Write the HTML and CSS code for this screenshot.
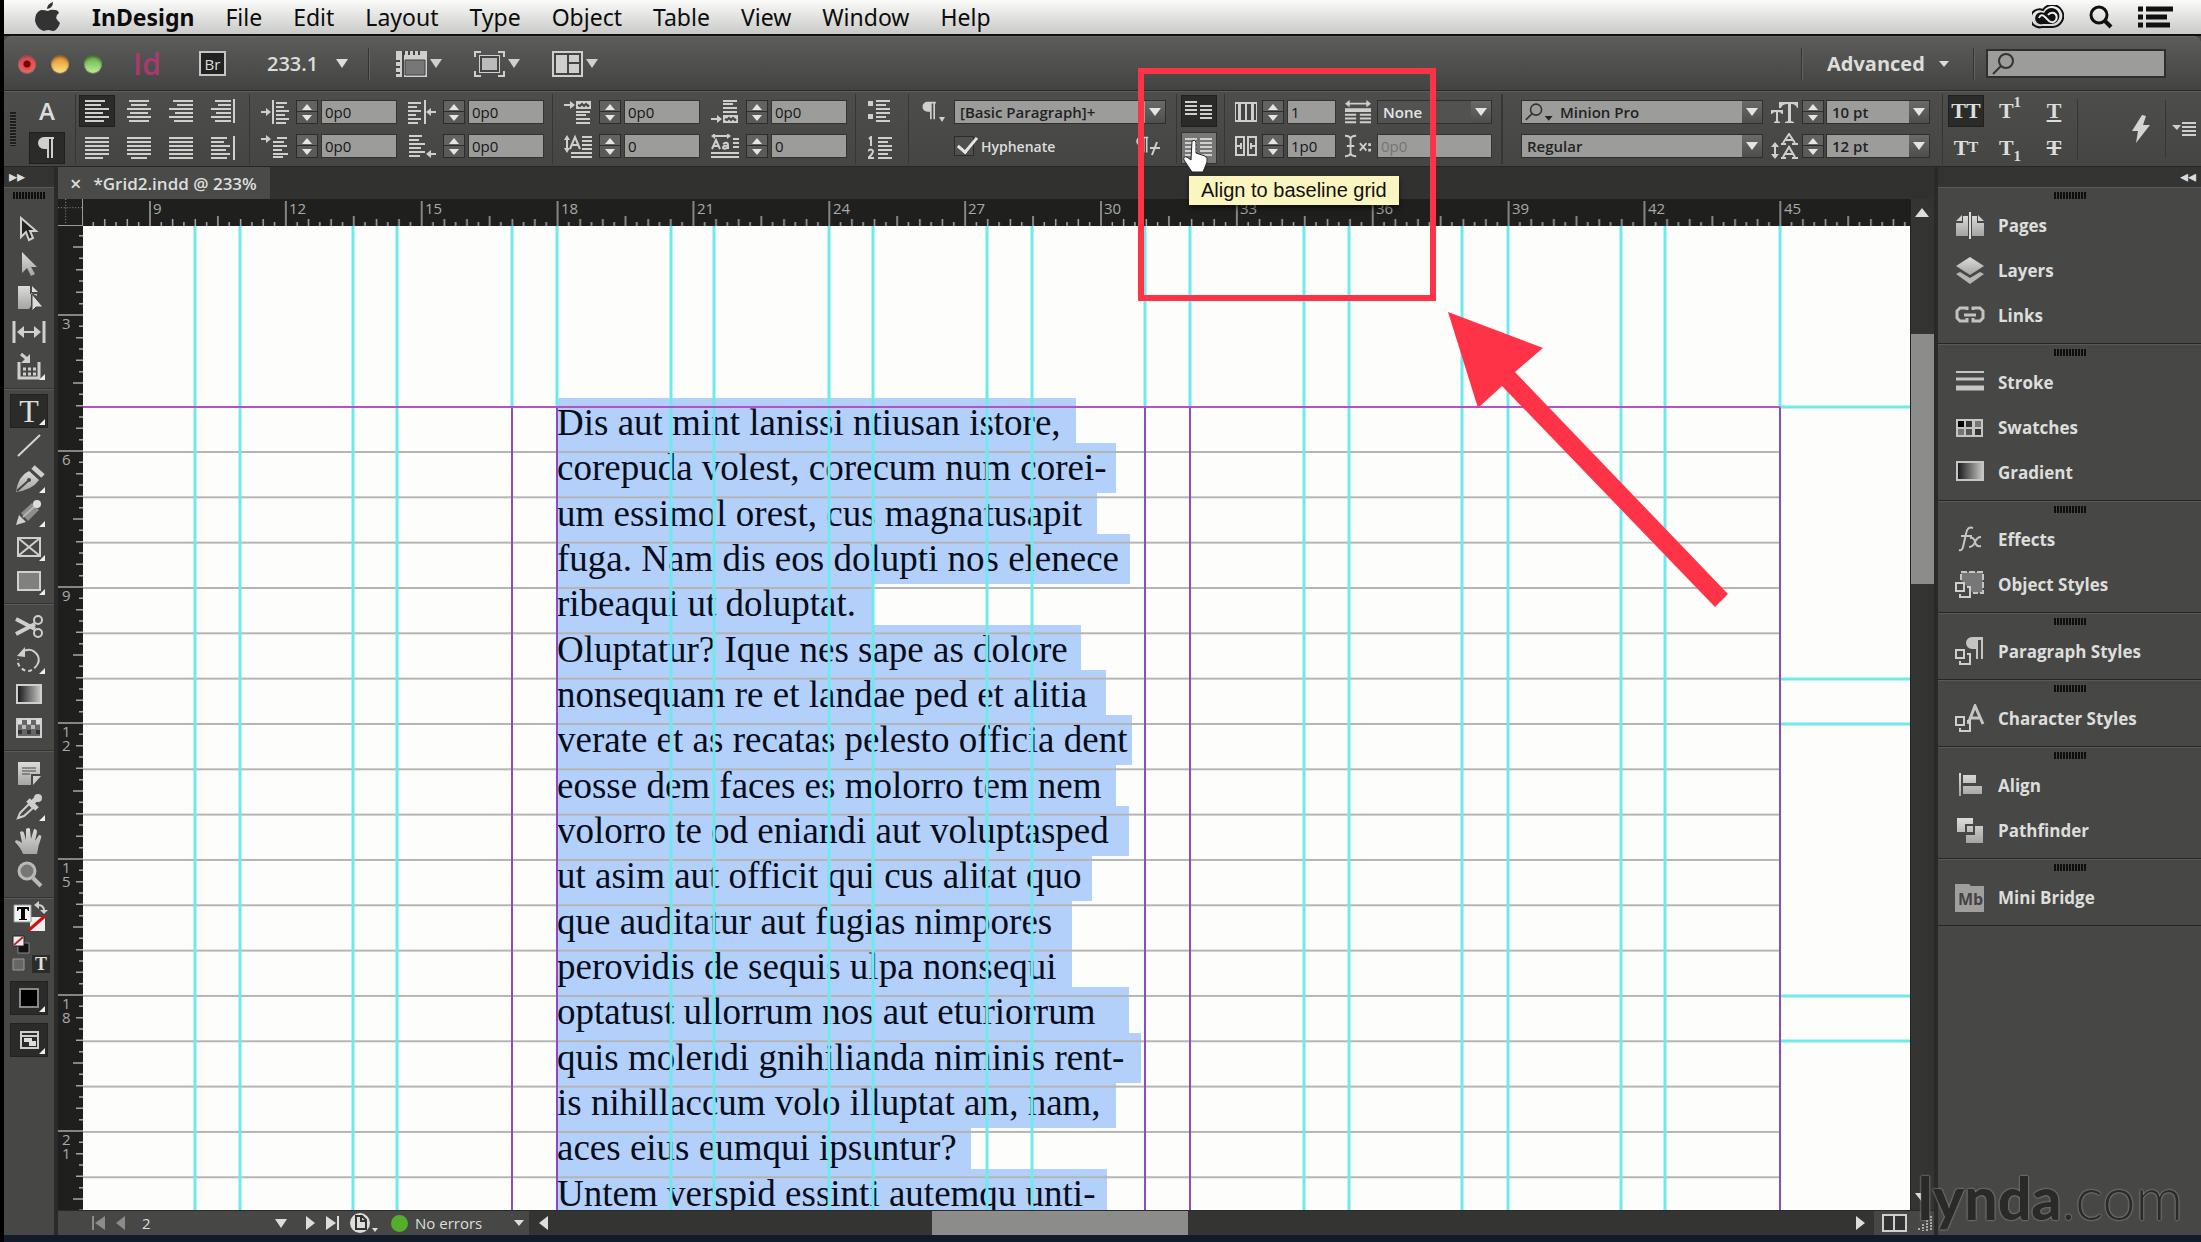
FILE: index.html
```html
<!DOCTYPE html>
<html lang="en">
<head>
    <meta charset="UTF-8">
    <meta name="viewport" content="width=device-width, initial-scale=1.0">
    <title>Grid2.indd</title>
    <link rel="stylesheet" href="styles.css">
</head>
<body>

    <!-- Shared icons -->
    <svg class="sprite" aria-hidden="true">
        <defs>
            <linearGradient id="silver" x1="0" y1="0" x2="0" y2="1"><stop offset="0" stop-color="#dcdddb"/><stop offset="1" stop-color="#a4a5a3"/></linearGradient>
            <linearGradient id="fade"><stop offset="0" stop-color="#151515"/><stop offset="1" stop-color="#c9cac8"/></linearGradient>
        </defs>
        <symbol id="al-left" viewBox="0 0 24 24"><path d="M0 2h20M0 6h16M0 10h24M0 14h18M0 18h24M0 22h19"/></symbol>
        <symbol id="al-center" viewBox="0 0 24 24"><path d="M2 2h20M4 6h16M0 10h24M3 14h18M0 18h24M2 22h20"/></symbol>
        <symbol id="al-right" viewBox="0 0 24 24"><path d="M4 2h20M8 6h16M0 10h24M6 14h18M0 18h24M5 22h19"/></symbol>
        <symbol id="al-spine" viewBox="0 0 24 24"><path d="M4 2h16M7 6h13M0 10h20M5 14h15M0 18h20M4 22h16M23 0v24"/></symbol>
        <symbol id="ju-left" viewBox="0 0 24 24"><path d="M0 2h24M0 6h24M0 10h24M0 14h24M0 18h24M0 22h18"/></symbol>
        <symbol id="ju-center" viewBox="0 0 24 24"><path d="M0 2h24M0 6h24M0 10h24M0 14h24M0 18h24M4 22h16"/></symbol>
        <symbol id="ju-full" viewBox="0 0 24 24"><path d="M0 2h24M0 6h24M0 10h24M0 14h24M0 18h24M0 22h24"/></symbol>
        <symbol id="al-away" viewBox="0 0 24 24"><path d="M0 2h16M0 6h13M0 10h19M0 14h15M0 18h19M0 22h16M23 0v24"/></symbol>
        <symbol id="in-left" viewBox="0 0 28 24"><path d="M0 12h7M12 0v24M15 3h11M15 7h8M15 11h13M15 15h9M15 19h13M15 23h10"/><path class="fill" d="M5 8l5 4-5 4z"/></symbol>
        <symbol id="in-right" viewBox="0 0 28 24"><path d="M22 12h6M17 0v24M0 3h13M0 7h9M0 11h13M0 15h8M0 19h13M0 23h10"/><path class="fill" d="M23 8l-5 4 5 4z"/></symbol>
        <symbol id="in-first" viewBox="0 0 28 24"><path d="M0 5h6M16 4h10M12 8h11M12 12h14M12 16h9M12 20h15M12 23h10"/><path class="fill" d="M5 1l5 4-5 4z"/></symbol>
        <symbol id="in-last" viewBox="0 0 28 24"><path d="M1 2h13M1 6h10M1 10h16M1 14h12M1 18h16M1 22h11M22 20h6"/><path class="fill" d="M23 16l-5 4 5 4z"/></symbol>
        <symbol id="sp-before" viewBox="0 0 28 24"><path d="M0 5h7M12 12h14M12 15h10M12 19h14M12 23h14"/><path class="fill" d="M6 1l5 4-5 4zM12 1h15v8H12z"/><path class="dark" d="M14 5l2 1 2-2 2 2 2-2 2 2 1-1"/></symbol>
        <symbol id="sp-after" viewBox="0 0 28 24"><path d="M0 19h7M12 1h14M12 4h10M12 8h14M12 12h14"/><path class="fill" d="M6 15l5 4-5 4zM12 15h15v8H12z"/><path class="dark" d="M14 19l2 1 2-2 2 2 2-2 2 2 1-1"/></symbol>
        <symbol id="drop-lines" viewBox="0 0 28 24"><path d="M3 4v12M18 3h10M18 7h10M18 11h10M18 15h10M7 19h21M7 23h21M6 15l5-12 5 12M8 11h6"/><path class="fill" d="M0 6l3-5 3 5zM0 14l3 5 3-5z"/></symbol>
        <symbol id="drop-chars" viewBox="0 0 28 24"><path d="M3 2h14M22 5h6M22 9h6M22 13h6M0 19h28M0 23h28M1 15l4-9 4 9M3 12h5"/><path d="M12 10q5-3 5 1v4M17 12q-5-1-5 2 2 2 5-1"/><path class="fill" d="M0 2l4-3v6zM20 2l-4-3v6z"/></symbol>
        <symbol id="bullets" viewBox="0 0 24 24"><path class="fill" d="M0 2h5v5H0zM0 15h5v5H0z"/><path d="M8 2h14M8 6h10M8 10h14M8 14h14M8 18h10M8 22h14"/></symbol>
        <symbol id="numbers" viewBox="0 0 24 24"><path d="M1 3l2-2v9M0 15q3-3 5 0 0 3-5 7h6M10 2h14M10 6h10M10 10h14M10 14h14M10 18h10M10 22h14"/></symbol>
        <symbol id="pilcrow" viewBox="0 0 24 24"><path class="fill" d="M9 1h10v2h-1v19h-2V3h-2v19h-2V13H9a6 6 0 0 1 0-12z"/></symbol>
        <symbol id="col-nogrid" viewBox="0 0 28 24"><path d="M0 3h12M0 7h12M0 11h12M0 15h12M15 7h12M15 11h12M15 15h12M15 19h12"/></symbol>
        <symbol id="col-grid" viewBox="0 0 28 24"><path d="M0 3h12M0 7h12M0 11h12M0 15h12M0 19h12M15 3h12M15 7h12M15 11h12M15 15h12M15 19h12"/></symbol>
        <symbol id="columns" viewBox="0 0 24 24"><path class="fill" d="M1 2h22v20H1z"/><path class="dark" d="M3 4v16M8 4v16M10 4v16M14 4v16M16 4v16M21 4v16"/></symbol>
        <symbol id="gutter" viewBox="0 0 24 24"><path d="M2 3h8v18H2zM14 3h8v18h-8zM3 12h5M16 12h5M7 9v6M17 9v6"/></symbol>
        <symbol id="span-cols" viewBox="0 0 28 24"><path d="M3 3h22M0 9h28M0 11h28M0 15h12M0 19h12M0 23h12M16 15h12M16 19h12M16 23h12"/><path class="fill" d="M0 3l5-4v8zM28 3l-5-4v8z"/></symbol>
        <symbol id="cursor-x" viewBox="0 0 28 24"><path d="M0 1q6 0 6 4v14q0 4-6 4M12 1q-6 0-6 4v14q0 4 6 4M2 12h8M16 9l7 8M23 9l-7 8"/><path class="fill" d="M25 9h3v3h-3zM25 15h3v3h-3z"/></symbol>
        <symbol id="lens" viewBox="0 0 24 24"><circle cx="14" cy="9" r="7"/><path d="M9 14l-8 8"/></symbol>
        <symbol id="font-size" viewBox="0 0 28 24"><path class="fill" d="M8 2h19v6h-1q-1-4-6-4v17l3 1v1h-9v-1l3-1V4q-6 0-7 4H8z"/><path class="fill" d="M0 10h12v4h-1q-1-2-4-2v9l2 1v1H3v-1l2-1v-9q-3 0-4 2H0z"/></symbol>
        <symbol id="leading" viewBox="0 0 28 26"><path d="M4 13v10M12 10l6-9 6 9M14 7h8M10 11h5M21 11h6M12 24l6-10 6 10M14 21h8M10 25h5M21 25h6"/><path class="fill" d="M0 14l4-5 4 5zM0 21l4 5 4-5z"/></symbol>
        <symbol id="stylebox" viewBox="0 0 16 16"><path d="M5 12v3h10V5h-3"/><path d="M1 1h8v8H1z"/></symbol>
    </svg>

    <header class="menubar">
        <svg class="apple" viewBox="0 0 26 30"><path d="M18 0q0 6-6 7 0-5 6-7zM13 9q3-2 7-1 3 0 4 3-6 4 1 10-2 6-6 8-3 0-5-1-3 0-5 1Q2 27 0 19 0 10 6 8q4 0 7 1z"/></svg>
        <nav class="menus">
            <a href="#" class="app">InDesign</a>
            <a href="#">File</a>
            <a href="#">Edit</a>
            <a href="#">Layout</a>
            <a href="#">Type</a>
            <a href="#">Object</a>
            <a href="#">Table</a>
            <a href="#">View</a>
            <a href="#">Window</a>
            <a href="#">Help</a>
        </nav>
        <div class="status-icons">
            <svg width="32" height="24" viewBox="0 0 32 24"><path d="M10 22a9 9 0 1 1 1-17 11 11 0 1 1 9 17z" fill="none" stroke="#111" stroke-width="2"/><path d="M11 19a6 6 0 1 1 1-11 8 8 0 1 1 8 11z" fill="#111"/><path d="M7 13q2-5 6-1l4 4q4 3 7-1 2-5-2-7-4-1-6 2" fill="none" stroke="#eee" stroke-width="2"/></svg>
            <svg width="24" height="24" viewBox="0 0 24 24"><circle cx="10" cy="10" r="8" fill="none" stroke="#111" stroke-width="3"/><path d="M15 15l7 7" stroke="#111" stroke-width="4"/></svg>
            <svg width="36" height="24" viewBox="0 0 36 24"><path d="M0 4h5M8 4h27M0 12h5M8 12h21M0 20h5M8 20h24" stroke="#111" stroke-width="5"/></svg>
        </div>
    </header>

    <div class="window">
        <div class="appbar">
            <div class="lights">
                <button class="light red" aria-label="Close"></button>
                <button class="light yellow" aria-label="Minimize"></button>
                <button class="light green" aria-label="Zoom"></button>
            </div>
            <span class="logo">Id</span>
            <button class="bridge">Br</button>
            <label class="plain-select zoom"><select aria-label="Zoom level"><option>233.1</option></select></label>
            <span class="sep"></span>
            <div class="view-options">
                <button class="drop" aria-label="View options"><svg width="31" height="26" viewBox="0 0 31 26"><path d="M0 0h31v26H0z" fill="#cfd0ce"/><path d="M8 0v4M13 0v4M18 0v4M23 0v4M0 10h4M0 16h4M0 22h4M7 0v26" stroke="#444" stroke-width="2"/><path d="M9 9h20v15H9z" fill="#777" stroke="#444"/></svg></button>
                <button class="drop" aria-label="Screen mode"><svg width="31" height="26" viewBox="0 0 31 26"><path d="M1 6V1h6M24 1h6v5M30 20v5h-6M7 25H1v-5" fill="none" stroke="#cfd0ce" stroke-width="2"/><path d="M5 4h21v18H5z" fill="#cfd0ce"/><path d="M7 6h17v14H7z" fill="#bbb" stroke="#444" stroke-width="2"/></svg></button>
                <button class="drop" aria-label="Arrange documents"><svg width="31" height="26" viewBox="0 0 31 26"><path d="M0 0h31v26H0z" fill="#cfd0ce"/><path d="M3 3h25v20H3zM16 3v20M16 12h12" fill="none" stroke="#444" stroke-width="2"/></svg></button>
            </div>
            <div class="workspace">
                <span class="sep"></span>
                <label class="plain-select small"><select aria-label="Workspace"><option>Advanced</option></select></label>
                <span class="sep"></span>
                <label class="search"><svg class="ico" width="24" height="24"><use href="#lens"/></svg><input type="search" aria-label="Search help"></label>
            </div>
        </div>

        <!-- Control panel -->
        <div class="control">
            <div class="grip-v"></div>
            <div class="pair modes">
                <button class="btn letter" aria-label="Character formatting">A</button>
                <button class="btn on" aria-label="Paragraph formatting"><svg class="ico" width="24" height="24"><use href="#pilcrow"/></svg></button>
            </div>
            <div class="grid aligns">
                <button class="btn on" aria-label="Align left"><svg class="ico" width="24" height="24"><use href="#al-left"/></svg></button>
                <button class="btn" aria-label="Align center"><svg class="ico" width="24" height="24"><use href="#al-center"/></svg></button>
                <button class="btn" aria-label="Align right"><svg class="ico" width="24" height="24"><use href="#al-right"/></svg></button>
                <button class="btn" aria-label="Align towards spine"><svg class="ico" width="24" height="24"><use href="#al-spine"/></svg></button>
                <button class="btn" aria-label="Justify last line left"><svg class="ico" width="24" height="24"><use href="#ju-left"/></svg></button>
                <button class="btn" aria-label="Justify last line centered"><svg class="ico" width="24" height="24"><use href="#ju-center"/></svg></button>
                <button class="btn" aria-label="Justify all lines"><svg class="ico" width="24" height="24"><use href="#ju-full"/></svg></button>
                <button class="btn" aria-label="Align away from spine"><svg class="ico" width="24" height="24"><use href="#al-away"/></svg></button>
            </div>
            <div class="grid fields">
                <label class="num"><svg class="ico" width="28" height="24"><use href="#in-left"/></svg><span class="spin"></span><input aria-label="Left indent" value="0p0"></label>
                <label class="num"><svg class="ico" width="28" height="24"><use href="#in-right"/></svg><span class="spin"></span><input aria-label="Right indent" value="0p0"></label>
                <label class="num"><svg class="ico" width="28" height="24"><use href="#in-first"/></svg><span class="spin"></span><input aria-label="First line indent" value="0p0"></label>
                <label class="num"><svg class="ico" width="28" height="24"><use href="#in-last"/></svg><span class="spin"></span><input aria-label="Last line indent" value="0p0"></label>
            </div>
            <div class="grid fields">
                <label class="num"><svg class="ico" width="28" height="24"><use href="#sp-before"/></svg><span class="spin"></span><input aria-label="Space before" value="0p0"></label>
                <label class="num"><svg class="ico" width="28" height="24"><use href="#sp-after"/></svg><span class="spin"></span><input aria-label="Space after" value="0p0"></label>
                <label class="num"><svg class="ico" width="28" height="24"><use href="#drop-lines"/></svg><span class="spin"></span><input aria-label="Drop cap lines" value="0"></label>
                <label class="num"><svg class="ico" width="28" height="24"><use href="#drop-chars"/></svg><span class="spin"></span><input aria-label="Drop cap characters" value="0"></label>
            </div>
            <div class="pair lists">
                <button class="btn" aria-label="Bulleted list"><svg class="ico" width="24" height="24"><use href="#bullets"/></svg></button>
                <button class="btn" aria-label="Numbered list"><svg class="ico" width="24" height="24"><use href="#numbers"/></svg></button>
            </div>
            <div class="pair pstyle">
                <div class="line">
                    <svg class="ico" width="27" height="24" viewBox="0 0 27 24"><use href="#pilcrow" width="20" height="22"/><path class="fill" d="M19 17h6l-3 5z"/></svg>
                    <label class="combo wide"><select aria-label="Paragraph style"><option>[Basic Paragraph]+</option></select></label>
                </div>
                <div class="line hyph">
                    <input type="checkbox" id="hyphenate" checked>
                    <label for="hyphenate">Hyphenate</label>
                    <svg class="ico clear" width="28" height="24" viewBox="0 0 28 24"><use href="#pilcrow" width="18" height="22"/><path d="M16 14h10M23 8l-5 13"/></svg>
                </div>
            </div>
            <div class="pair baseline">
                <button class="btn on" aria-label="Do not align to baseline grid"><svg class="ico" width="28" height="24"><use href="#col-nogrid"/></svg></button>
                <button class="btn hover" aria-label="Align to baseline grid" aria-describedby="tip"><svg class="ico" width="28" height="24"><use href="#col-grid"/></svg></button>
            </div>
            <div class="pair cols">
                <div class="line">
                    <label class="num"><svg class="ico" width="24" height="24"><use href="#columns"/></svg><span class="spin"></span><input aria-label="Number of columns" value="1"></label>
                    <svg class="ico" width="26" height="24"><use href="#span-cols"/></svg>
                    <label class="combo dark-combo"><select aria-label="Span columns"><option>None</option></select></label>
                </div>
                <div class="line">
                    <label class="num"><svg class="ico" width="24" height="24"><use href="#gutter"/></svg><span class="spin"></span><input aria-label="Gutter" value="1p0"></label>
                    <svg class="ico" width="26" height="24"><use href="#cursor-x"/></svg>
                    <input class="xpos" aria-label="Cursor position" value="0p0" disabled>
                </div>
            </div>
            <div class="pair fonts">
                <div class="line">
                    <label class="combo font has-lens"><svg class="ico" width="30" height="20" viewBox="0 0 38 24"><use href="#lens" width="24" height="24"/><path d="M25 17h10l-5 6z" fill="#222" stroke="none"/></svg><select aria-label="Font family"><option>Minion Pro</option></select></label>
                    <label class="num size"><svg class="ico" width="28" height="24"><use href="#font-size"/></svg><span class="spin"></span><span class="combo"><select aria-label="Font size"><option>10 pt</option></select></span></label>
                </div>
                <div class="line">
                    <label class="combo font"><select aria-label="Font style"><option>Regular</option></select></label>
                    <label class="num size"><svg class="ico" width="28" height="26"><use href="#leading"/></svg><span class="spin"></span><span class="combo"><select aria-label="Leading"><option>12 pt</option></select></span></label>
                </div>
            </div>
            <div class="grid caps">
                <button class="btn on">TT</button>
                <button class="btn" aria-label="Superscript">T<sup>1</sup></button>
                <button class="btn" aria-label="Underline"><u>T</u></button>
                <button class="btn" aria-label="Small caps">T<small>T</small></button>
                <button class="btn" aria-label="Subscript">T<sub>1</sub></button>
                <button class="btn" aria-label="Strikethrough"><s>T</s></button>
            </div>
            <div class="quick">
                <button class="btn" aria-label="Quick apply"><svg width="18" height="28" viewBox="0 0 18 28"><path d="M10 0L0 16h6L4 28 18 10h-7l3-9z" fill="#d4d5d3"/></svg></button>
                <button class="btn flyout" aria-label="Panel menu"><svg class="ico" width="24" height="16" viewBox="0 0 24 16"><path class="fill" d="M0 4h9l-4 5z"/><path d="M10 2h14M10 6h14M10 10h14M10 14h14"/></svg></button>
            </div>
        </div>

        <div class="workarea">
            <aside class="toolbox">
                <div class="dock-head">&#9656;&#9656;</div>
                <div class="grip"></div>
                <div class="tools first">
                    <button class="tool" aria-label="Selection"><svg viewBox="0 0 34 34"><path d="M9 5v19l5-5 3 8 4-2-3-7h6z" fill="#222" stroke="#cfd0ce" stroke-width="2"/></svg></button>
                    <button class="tool" aria-label="Direct selection"><svg viewBox="0 0 34 34"><path d="M10 5v21l5-5 4 8 4-2-4-7h6z" fill="url(#silver)"/></svg></button>
                    <button class="tool" aria-label="Page"><svg viewBox="0 0 34 34"><path d="M6 5h12v8h7v2l-6-3v13l-2 3H6z" fill="url(#silver)"/><path d="M20 5l6 6h-6z" fill="#ddd"/><path d="M20 13v17l4-4h7z" fill="#ddd" stroke="#444"/></svg></button>
                    <button class="tool" aria-label="Gap"><svg viewBox="0 0 34 34"><path d="M2 6v22M32 6v22" stroke="#cfd0ce" stroke-width="3"/><path d="M8 17h18" stroke="#cfd0ce" stroke-width="2"/><path d="M5 17l7-6v12zM29 17l-7-6v12z" fill="#cfd0ce"/></svg></button>
                    <button class="tool more" aria-label="Content collector"><svg viewBox="0 0 34 34"><path d="M7 13v16h20V13" fill="none" stroke="#cfd0ce" stroke-width="3"/><path d="M11 20h13M11 25h13" stroke="#cfd0ce" stroke-width="3" stroke-dasharray="3 2"/><path d="M9 5l6 5" stroke="#cfd0ce" stroke-width="3"/><path d="M18 5v9H9z" fill="#cfd0ce"/></svg></button>
                </div>
                <div class="tools">
                    <button class="tool more on type-tool" aria-label="Type">T</button>
                    <button class="tool" aria-label="Line"><svg viewBox="0 0 34 34"><path d="M6 28L28 7" stroke="#d4d5d3" stroke-width="2"/></svg></button>
                    <button class="tool more" aria-label="Pen"><svg viewBox="0 0 34 34"><path d="M4 30Q6 14 17 9l10 9Q20 28 4 30z" fill="url(#silver)"/><path d="M5 29l11-10" stroke="#444" stroke-width="2"/><circle cx="17" cy="18" r="2" fill="#444"/><path d="M21 5l10 9" stroke="#cfd0ce" stroke-width="5"/></svg></button>
                    <button class="tool more" aria-label="Pencil"><svg viewBox="0 0 34 34"><path d="M4 29l3-10 7 7z" fill="#cfd0ce"/><path d="M9 17L20 7l7 7-11 11z" fill="#8d8e8c"/><path d="M11 21L24 9" stroke="#b5b6b4" stroke-width="2"/><circle cx="25" cy="8" r="4" fill="#ddd"/></svg></button>
                    <button class="tool more" aria-label="Frame"><svg viewBox="0 0 34 34"><path d="M6 8h22v18H6zM6 8l22 18M28 8L6 26" fill="none" stroke="#cfd0ce" stroke-width="2"/></svg></button>
                    <button class="tool more" aria-label="Rectangle"><svg viewBox="0 0 34 34"><path d="M6 8h22v18H6z" fill="#80817f" stroke="#cfd0ce" stroke-width="2"/></svg></button>
                </div>
                <div class="tools">
                    <button class="tool" aria-label="Scissors"><svg viewBox="0 0 34 34"><path d="M4 10l19 10M4 25l19-10" stroke="#cfd0ce" stroke-width="4"/><g fill="none" stroke="#cfd0ce" stroke-width="2"><circle cx="26" cy="11" r="4"/><circle cx="26" cy="24" r="4"/></g></svg></button>
                    <button class="tool more" aria-label="Rotate"><svg viewBox="0 0 34 34"><path d="M10 9q10-6 16 4 2 5-1 9" fill="none" stroke="#cfd0ce" stroke-width="2"/><path d="M25 22q-8 11-17 2-3-4-2-8" fill="none" stroke="#cfd0ce" stroke-width="2" stroke-dasharray="4 3"/><path d="M13 4v10l-8-1z" fill="#cfd0ce"/></svg></button>
                    <button class="tool" aria-label="Gradient swatch"><svg viewBox="0 0 34 34"><path d="M5 8h24v18H5z" fill="url(#fade)" stroke="#cfd0ce" stroke-width="2"/></svg></button>
                    <button class="tool" aria-label="Gradient feather"><svg viewBox="0 0 34 34"><path d="M5 8h24v18H5z" fill="#666" stroke="#cfd0ce" stroke-width="2"/><path d="M6 11h22" stroke="#ddd" stroke-width="5" stroke-dasharray="4 5"/><path d="M10 16h18" stroke="#bbb" stroke-width="4" stroke-dasharray="4 5"/><path d="M6 21h22" stroke="#333" stroke-width="4" stroke-dasharray="4 5"/></svg></button>
                </div>
                <div class="tools">
                    <button class="tool" aria-label="Note"><svg viewBox="0 0 34 34"><path d="M6 6h22v12h-9v11H6z" fill="url(#silver)"/><path d="M21 20h8l-8 9z" fill="#cfd0ce"/><path d="M10 12h14M10 15h14M10 18h8" stroke="#444" stroke-width="1"/></svg></button>
                    <button class="tool more" aria-label="Eyedropper"><svg viewBox="0 0 34 34"><path d="M6 28l2-5 9-9 4 4-9 8z" fill="none" stroke="#cfd0ce" stroke-width="2"/><path d="M16 10l9 9M20 13l7-7" stroke="#cfd0ce" stroke-width="5"/><circle cx="26" cy="8" r="4" fill="#cfd0ce"/></svg></button>
                    <button class="tool" aria-label="Hand"><svg viewBox="0 0 34 34"><path d="M11 30q-2-6-8-12 0-3 4-1l3 2L8 8q3-2 4 1l2 7V5q3-2 4 0l1 10 3-10q3 0 3 3l-2 9 4-6q3 0 2 3-3 8-4 16z" fill="url(#silver)"/></svg></button>
                    <button class="tool" aria-label="Zoom"><svg viewBox="0 0 34 34"><circle cx="15" cy="13" r="8" fill="#777" stroke="#b9bab8" stroke-width="3"/><path d="M21 20l8 8" stroke="#b9bab8" stroke-width="4"/></svg></button>
                </div>
                <div class="tools colors">
                    <svg width="38" height="72" viewBox="0 0 38 72" aria-hidden="true"><path d="M20 18h15v14H20z" fill="#eee"/><path d="M19 31l16-14" stroke="#d01010" stroke-width="3"/><path d="M4 6h17v17H4z" fill="#f4f4f4" stroke="#999"/><path d="M7 8h12v4h-1l-1-2h-2v10h2v1H9v-1h2V10H9l-1 2H7z" fill="#000"/><path d="M28 6q6 0 6 6" stroke="#cfd0ce" stroke-width="2" fill="none"/><path d="M24 6l5-4v8zM30 11h8l-4 4z" fill="#cfd0ce"/><path d="M8 44h11v10H8z" fill="#111" stroke="#888"/><path d="M3 37h11v10H3z" fill="#eee" stroke="#222"/><path d="M4 46l9-8" stroke="#c22" stroke-width="2"/><path d="M3 60h11v11H3z" fill="#666" stroke="#999"/></svg>
                    <b class="text-affect">T</b>
                </div>
                <button class="tool more on apply" aria-label="Apply color"><svg viewBox="0 0 34 34"><path d="M8 8h18v18H8z" fill="#000" stroke="#888" stroke-width="2"/></svg></button>
                <button class="tool more on apply" aria-label="Screen mode"><svg viewBox="0 0 34 34"><path d="M9 9h17v16H9zM9 13h17" fill="none" stroke="#cfd0ce" stroke-width="2"/><path d="M12 15h8v3h4v5h-7v-4h-5z" fill="#ddd"/></svg></button>
            </aside>

            <main class="document">
                <div class="tabs">
                    <div class="tab"><button class="close" aria-label="Close tab">&times;</button>*Grid2.indd @ 233%</div>
                </div>
                <div class="view">
                    <svg class="corner" viewBox="0 0 25 27"><path d="M8 0v27M0 9h25" stroke="#999" stroke-dasharray="1 2"/></svg>
                    <svg class="ruler ruler-h">
                        <defs>
                            <pattern id="ticks-h" width="135.86" height="27" patternUnits="userSpaceOnUse" patternTransform="translate(66 0)">
                                <path d="M1 2v25M68.9 17v10M23.6 20v7M46.3 20v7M91.6 20v7M114.2 20v7M12.3 23v4M34.9 23v4M57.6 23v4M80.2 23v4M102.9 23v4M125.5 23v4" stroke="#a6a7a5" stroke-width="1.5"/>
                            </pattern>
                        </defs>
                        <rect width="100%" height="27" fill="url(#ticks-h)"/>
                        <text x="70" y="15">9</text><text x="206" y="15">12</text><text x="342" y="15">15</text><text x="478" y="15">18</text><text x="614" y="15">21</text><text x="750" y="15">24</text><text x="885" y="15">27</text><text x="1021" y="15">30</text><text x="1157" y="15">33</text><text x="1293" y="15">36</text><text x="1429" y="15">39</text><text x="1565" y="15">42</text><text x="1701" y="15">45</text>
                    </svg>
                    <div class="vscroll-top"></div>
                    <svg class="ruler ruler-v">
                        <defs>
                            <pattern id="ticks-v" width="25" height="136" patternUnits="userSpaceOnUse" patternTransform="translate(0 88)">
                                <path d="M0 1h25M15 69h10M18 23.7h7M18 46.3h7M18 91.7h7M18 114.3h7M21 12.3h4M21 35h4M21 57.7h4M21 80.3h4M21 103h4M21 125.7h4" stroke="#a6a7a5" stroke-width="1.5"/>
                            </pattern>
                        </defs>
                        <rect width="25" height="100%" fill="url(#ticks-v)"/>
                        <text x="4" y="103">3</text>
                        <text x="4" y="239">6</text>
                        <text x="4" y="375">9</text>
                        <text x="4 4" y="511 525">12</text>
                        <text x="4 4" y="647 661">15</text>
                        <text x="4 4" y="783 797">18</text>
                        <text x="4 4" y="919 933">21</text>
                    </svg>
                    <div class="canvas">
                        <div class="story">
                            <p style="width:519px">Dis aut mint lanissi ntiusan istore,</p>
                            <p style="width:559px">corepuda volest, corecum num corei-</p>
                            <p style="width:540px">um essimol orest, cus magnatusapit</p>
                            <p style="width:573px">fuga. Nam dis eos dolupti nos elenece</p>
                            <p style="width:316px">ribeaqui ut doluptat.</p>
                            <p style="width:524px">Oluptatur? Ique nes sape as dolore</p>
                            <p style="width:549px">nonsequam re et landae ped et alitia</p>
                            <p style="width:575px">verate et as recatas pelesto officia dent</p>
                            <p style="width:559px">eosse dem faces es molorro tem nem</p>
                            <p style="width:572px">volorro te od eniandi aut voluptasped</p>
                            <p style="width:535px">ut asim aut officit qui cus alitat quo</p>
                            <p style="width:515px">que auditatur aut fugias nimpores</p>
                            <p style="width:515px">perovidis de sequis ulpa nonsequi</p>
                            <p style="width:572px">optatust ullorrum nos aut eturiorrum</p>
                            <p style="width:584px">quis molendi gnihilianda niminis rent-</p>
                            <p style="width:559px">is nihillaccum volo illuptat am, nam,</p>
                            <p style="width:414px">aces eius eumqui ipsuntur?</p>
                            <p style="width:550px">Untem verspid essinti autemqu unti-</p>
                        </div>
                        <svg class="guides" aria-hidden="true">
                            <defs>
                                <pattern id="baseline" width="100" height="45.33" patternUnits="userSpaceOnUse" patternTransform="translate(0 225)"><path d="M0 1h100" stroke="#b4b4b4" stroke-width="2"/></pattern>
                            </defs>
                            <rect y="200" width="1697" height="100%" fill="url(#baseline)"/>
                            <!-- ruler guides -->
                            <path class="cyan" d="M112 0v990M157 0v990M270 0v990M314 0v990M429 0v181M474 0v181M588 0v990M631 0v990M746 0v990M790 0v990M904 0v990M949 0v990M1062 0v181M1107 0v181M1221 0v990M1266 0v990M1379 0v990M1425 0v990M1538 0v990M1582 0v990M1697 0v181M1697 181h140M1697 453h140M1697 498h140M1697 770h140M1697 815h140"/>
                            <!-- margins and columns -->
                            <path class="violet" d="M429 181v810M474 181v810M1062 181v810M1107 181v810M1697 181v810"/>
                            <path class="magenta" d="M0 181h1697"/>
                        </svg>
                    </div>
                    <div class="vscroll"><i class="thumb"></i></div>
                </div>
                <footer class="statusbar">
                    <div class="pager">
                        <button class="nav dim" aria-label="First page"><svg width="13" height="14" viewBox="0 0 13 14"><path d="M0 0h2v14H0zM13 0v14L3 7z"/></svg></button>
                        <button class="nav dim" aria-label="Previous page"><svg width="9" height="14" viewBox="0 0 9 14"><path d="M9 0v14L0 7z"/></svg></button>
                        <label class="plain-select page"><select aria-label="Page"><option>2</option></select></label>
                        <button class="nav" aria-label="Next page"><svg width="9" height="14" viewBox="0 0 9 14"><path d="M0 0v14l9-7z"/></svg></button>
                        <button class="nav" aria-label="Last page"><svg width="13" height="14" viewBox="0 0 13 14"><path d="M11 0h2v14h-2zM0 0v14l10-7z"/></svg></button>
                        <button class="nav" aria-label="Open"><svg width="28" height="22" viewBox="0 0 28 22"><circle cx="10" cy="11" r="10"/><path d="M6 4h6l4 4v9H6zM11 4v5h5" fill="none" stroke="#333" stroke-width="2"/><path d="M22 16h6l-3 4z"/></svg></button>
                    </div>
                    <label class="plain-select small errors"><i class="dot"></i><select aria-label="Preflight"><option>No errors</option></select></label>
                    <div class="hscroll"><i class="arrow left"></i><i class="thumb"></i><i class="arrow right"></i></div>
                    <button class="split" aria-label="Split layout view"></button>
                    <svg class="resize" width="16" height="16" viewBox="0 0 16 16"><path d="M14 1v15M10 5v11M6 9v7M2 13v3" stroke="#aaa" stroke-width="2" stroke-dasharray="2 1"/></svg>
                </footer>
            </main>

            <aside class="dock">
                <div class="dock-head">&#9666;&#9666;</div>
                <section class="panel-group">
                    <div class="grip"></div>
                    <button class="panel"><svg viewBox="0 0 30 30"><path d="M8 5h5v20H1V12h7zM1 10l6-6v6zM17 5h5v7h7v13H17zM23 4l6 6h-6z" fill="url(#silver)"/><path d="M15 1v27" stroke="#ddd" stroke-width="2"/></svg>Pages</button>
                    <button class="panel"><svg viewBox="0 0 30 30"><path d="M15 1l14 9-14 9L1 10z" fill="url(#silver)"/><path d="M1 18l4-2 10 6 10-6 4 2-14 10z" fill="#b5b6b4"/></svg>Layers</button>
                    <button class="panel"><svg viewBox="0 0 30 30"><path d="M12 9V7H5L2 10v7l3 3h7v-3M18 9V7h7l3 3v7l-3 3h-7v-3M9 14h12" fill="none" stroke="#c2c3c1" stroke-width="3"/></svg>Links</button>
                </section>
                <section class="panel-group">
                    <div class="grip"></div>
                    <button class="panel"><svg viewBox="0 0 30 30"><path d="M1 4h28" stroke="#c5c6c4" stroke-width="2"/><path d="M1 11h28" stroke="#c5c6c4" stroke-width="3"/><path d="M1 20h28" stroke="#c5c6c4" stroke-width="5"/></svg>Stroke</button>
                    <button class="panel"><svg viewBox="0 0 30 30"><path d="M1 6h27v18H1z" fill="#c5c6c4"/><path d="M3 8h6v6H3z" fill="#000"/><path d="M11 8h6v6h-6zM20 16h6v6h-6z" fill="#333"/><path d="M20 8h6v6h-6zM3 16h6v6H3z" fill="#777"/><path d="M11 16h6v6h-6z" fill="#555"/></svg>Swatches</button>
                    <button class="panel"><svg viewBox="0 0 30 30"><path d="M2 4h26v18H2z" fill="url(#fade)" stroke="#c5c6c4" stroke-width="2"/></svg>Gradient</button>
                </section>
                <section class="panel-group">
                    <div class="grip"></div>
                    <button class="panel"><svg viewBox="0 0 30 30"><path d="M18 3q-6-2-7 6L8 22q-1 4-4 3M6 11h11M15 13q4-1 5 4t6 4M26 12q-4 0-6 5t-6 5" fill="none" stroke="#c5c6c4" stroke-width="2"/></svg>Effects</button>
                    <button class="panel"><svg viewBox="0 0 30 30"><path d="M6 10V2h22v21H18" fill="#777" stroke="#c5c6c4" stroke-width="2" stroke-dasharray="6 2"/><use class="ico" href="#stylebox" x="0" y="12" width="16" height="16"/></svg>Object Styles</button>
                </section>
                <section class="panel-group">
                    <div class="grip"></div>
                    <button class="panel"><svg viewBox="0 0 30 30"><path d="M17 0h11v22h-2V3h-3v19h-2V12h-4a6 6 0 0 1 0-12z" fill="#c5c6c4"/><use class="ico" href="#stylebox" x="0" y="12" width="16" height="16"/></svg>Paragraph Styles</button>
                </section>
                <section class="panel-group">
                    <div class="grip"></div>
                    <button class="panel"><svg viewBox="0 0 30 30"><path d="M13 20l7-18 8 18M16 14h9" fill="none" stroke="#c5c6c4" stroke-width="3"/><use class="ico" href="#stylebox" x="0" y="12" width="16" height="16"/></svg>Character Styles</button>
                </section>
                <section class="panel-group">
                    <div class="grip"></div>
                    <button class="panel"><svg viewBox="0 0 30 30"><path d="M4 2h2v23H4zM8 4h13v8H8zM8 15h19v8H8z" fill="url(#silver)"/></svg>Align</button>
                    <button class="panel"><svg viewBox="0 0 30 30"><path d="M2 2h16v6h-8v8H2zM20 10h8v17H11v-8h9zM12 10h6v6h-6z" fill="url(#silver)"/></svg>Pathfinder</button>
                </section>
                <section class="panel-group">
                    <div class="grip"></div>
                    <button class="panel"><svg viewBox="0 0 30 30"><path d="M0 1h14l2 2h13v26H0z" fill="#9fa09e"/><text x="3" y="22" font-size="16" font-weight="700" fill="#444">Mb</text></svg>Mini Bridge</button>
                </section>
            </aside>
        </div>
    </div>

    <!-- Things floating over the window -->
    <div class="tooltip" id="tip" role="tooltip">Align to baseline grid</div>
    <svg class="pointer" width="26" height="34" viewBox="0 0 26 34"><path d="M9 2q3-2 4 1v11l9 3q3 2 2 6l-4 10H9L1 21q-1-4 3-3l4 3z" fill="#fff" stroke="#222" stroke-width="1"/></svg>
    <div class="highlight"></div>
    <svg class="arrow-note" width="280" height="296" viewBox="0 0 280 296"><path d="M0 0l95 36-28 24 213 222-13 13L54 74l-24 22z" fill="#ff3347"/></svg>
    <div class="watermark"><b>lynda</b>.com</div>

</body>
</html>
```
FILE: styles.css
```css
* {
    box-sizing: border-box;
}

html,
body {
    height: 100%;
}

body {
    margin: 0;
    padding-left: 4px;
    display: flex;
    flex-direction: column;
    position: relative;
    overflow: hidden;
    background: #000;
    color: #dddedc;
    font-family: "Open Sans", "Noto Sans", sans-serif;
    font-size: 15px;
}

button,
input,
select {
    font: inherit;
    color: inherit;
    margin: 0;
    padding: 0;
    border: 0;
    border-radius: 0;
    background: none;
    appearance: none;
}

svg {
    display: block;
    flex: none;
}

.sprite {
    position: absolute;
    width: 0;
    height: 0;
}

.ico {
    fill: none;
    stroke: #cfd0ce;
    stroke-width: 2;
    overflow: visible;
}

.ico .fill,
symbol .fill {
    fill: #cfd0ce;
    stroke: none;
}

symbol .dark {
    stroke: #444;
}

/* Menu bar */
.menubar {
    flex: none;
    display: flex;
    align-items: center;
    height: 36px;
    padding: 0 27px 0 31px;
    border-bottom: 2px solid #101010;
    background: linear-gradient(#fbfcfa, #c9cac8);
    color: #0c0c0c;
}

.apple {
    width: 26px;
    height: 30px;
    fill: #333;
}

.menus {
    display: flex;
    gap: 31px;
    margin-left: 31px;
    font-family: "Noto Sans", sans-serif;
    font-size: 23px;
    line-height: 30px;
}

.menus a {
    color: inherit;
    text-decoration: none;
}

.menus .app {
    font-weight: 700;
}

.status-icons {
    display: flex;
    gap: 25px;
    margin-left: auto;
}

/* Application bar */
.window {
    flex: 1;
    min-height: 0;
    display: flex;
    flex-direction: column;
    margin-bottom: 7px;
    box-shadow: 0 7px #131a2c;
    background: #474846;
}

.appbar {
    flex: none;
    display: flex;
    align-items: center;
    height: 55px;
    padding: 0 35px 0 14px;
    border-top: 1px solid #6a6b69;
    border-bottom: 1px solid #2a2b29;
    border-radius: 8px 8px 0 0;
    background: linear-gradient(#5c5d5b, #434442);
}

.lights {
    display: flex;
    gap: 15px;
}

.light {
    width: 18px;
    height: 18px;
    border-radius: 50%;
    box-shadow: inset 0 2px 3px #0006, 0 1px #777;
}

.red {
    background: radial-gradient(circle, #700 0 3px, #e04a4a 4px, #f48a8a);
}

.yellow {
    background: linear-gradient(#e58a2e, #fce07a);
}

.green {
    background: linear-gradient(#5faa45, #baf08e);
}

.logo {
    width: 28px;
    margin-left: 31px;
    color: #a83a70;
    font-size: 30px;
    font-weight: 600;
    line-height: 36px;
}

.bridge {
    width: 27px;
    height: 25px;
    margin-left: 38px;
    border: 2px solid #c5c6c4;
    background: #222;
}

.plain-select {
    display: flex;
    align-items: center;
}

.plain-select::after {
    content: "";
    border: 6px solid transparent;
    border-top: 9px solid #dddedc;
    border-bottom: 0;
}

.small::after {
    border-width: 6px 5px 0;
}

.zoom {
    width: 81px;
    margin-left: 41px;
    font-size: 20px;
    font-weight: 600;
}

.plain-select select {
    flex: 1;
    min-width: 0;
}

.sep {
    width: 2px;
    height: 32px;
    border-left: 1px solid #333;
    border-right: 1px solid #636462;
}

.zoom + .sep {
    margin-left: 20px;
}

.view-options {
    display: flex;
    gap: 32px;
    margin-left: 26px;
}

.drop {
    display: flex;
    align-items: center;
    gap: 3px;
}

.drop::after {
    content: "";
    border: 6px solid transparent;
    border-top: 9px solid #cfd0ce;
    border-bottom: 0;
}

.workspace {
    display: flex;
    align-items: center;
    margin-left: auto;
}

.workspace .plain-select {
    width: 122px;
    margin: 0 24px;
    font-size: 20px;
    font-weight: 700;
}

.search {
    display: flex;
    align-items: center;
    width: 180px;
    height: 29px;
    margin-left: 11px;
    padding-left: 4px;
    border: 2px solid #2f302e;
    background: #9c9d9b;
}

.search .ico,
.has-lens .ico {
    stroke: #333;
}

.search input {
    flex: 1;
    min-width: 0;
}

/* Control panel */
.control {
    flex: none;
    display: flex;
    align-items: center;
    height: 76px;
    border-top: 1px solid #5d5e5c;
    border-bottom: 1px solid #262725;
    background: linear-gradient(#4d4e4c, #454644);
}

.control > div + div + div {
    border-left: 1px solid #363735;
}

.grip-v {
    width: 6px;
    height: 34px;
    margin: 0 13px 0 6px;
    background: repeating-linear-gradient(#1e1f1d 0 2px, #555 2px 3px);
}

.pair,
.grid {
    display: grid;
    grid-template-rows: 32px 32px;
    align-items: center;
    align-content: center;
    row-gap: 5px;
    height: 70px;
}

.line {
    display: flex;
    align-items: center;
}

.btn {
    display: flex;
    align-items: center;
    justify-content: center;
    width: 36px;
    height: 32px;
}

.btn.on {
    background: #2b2c2a;
    box-shadow: inset 0 0 0 1px #1f201e;
}

.btn.hover {
    background: #777876;
    box-shadow: inset 0 0 0 1px #333;
}

.modes {
    width: 46px;
}

.letter {
    font-size: 24px;
    font-weight: 600;
}

.aligns {
    grid-template-columns: repeat(4, 36px);
    column-gap: 6px;
    width: 174px;
    padding-left: 3px;
}

.fields,
.pstyle,
.cols,
.fonts {
    row-gap: 2px;
}

.fields {
    grid-template-columns: 136px 136px;
    column-gap: 11px;
    width: 303px;
    padding-left: 11px;
}

.num {
    display: flex;
    align-items: center;
}

.spin {
    position: relative;
    width: 22px;
    height: 24px;
    margin: 0 3px 0 7px;
    border: 1px solid #2c2d2b;
    background: linear-gradient(#636462 0 10px, #2c2d2b 10px 11px, #5a5b59 11px);
}

.spin::before,
.spin::after {
    content: "";
    position: absolute;
    left: 5px;
    border: 5px solid transparent;
}

.spin::before {
    top: 3px;
    border-top: 0;
    border-bottom: 6px solid #e5e6e4;
}

.spin::after {
    bottom: 2px;
    border-bottom: 0;
    border-top: 6px solid #e5e6e4;
}

.num input,
.xpos {
    width: 76px;
    height: 24px;
    padding-left: 3px;
    border: 1px solid #333432;
    background: #9c9d9b;
    color: #151515;
}

.combo {
    position: relative;
    display: flex;
    align-items: center;
    height: 24px;
    border: 1px solid #2f302e;
    background: #9c9d9b;
    color: #222;
}

.combo select {
    flex: 1;
    min-width: 0;
    height: 22px;
    padding-left: 5px;
}

.combo::after {
    content: "";
    width: 20px;
    height: 22px;
    background: linear-gradient(#6a6b69, #4e4f4d);
}

.combo::before {
    content: "";
    position: absolute;
    right: 4px;
    top: 7px;
    border: 6px solid transparent;
    border-top: 8px solid #e5e6e4;
    border-bottom: 0;
}

.lists {
    width: 53px;
    padding-left: 6px;
}

.pstyle {
    width: 268px;
    padding-left: 11px;
}

.wide {
    width: 212px;
    margin-left: 7px;
    font-weight: 600;
}

.hyph {
    padding-left: 34px;
    font-size: 14px;
    font-weight: 600;
}

.hyph label {
    flex: 1;
    padding-left: 7px;
}

.hyph input {
    width: 20px;
    height: 20px;
    border: 1px solid #2c2d2b;
    background: #4f504e;
}

.hyph input:checked::before {
    content: "";
    display: block;
    width: 8px;
    height: 17px;
    margin: -4px 0 0 7px;
    border: solid #e5e6e4;
    border-width: 0 3px 3px 0;
    transform: rotate(40deg);
}

.clear {
    margin-right: 14px;
}

.baseline {
    width: 48px;
    padding-left: 4px;
}

.cols {
    width: 277px;
    padding-left: 9px;
}

.cols .spin {
    margin-left: 4px;
}

.cols .num input {
    width: 49px;
    margin-right: 9px;
}

.dark-combo {
    width: 115px;
    margin-left: 6px;
    background: #525351;
    color: #e5e6e4;
    font-weight: 600;
}

.xpos {
    width: 115px;
    margin-left: 6px;
}

.xpos:disabled {
    color: #747573;
}

.fonts {
    width: 441px;
    padding-left: 19px;
    box-shadow: inset 9px 0 0 -8px #363735;
}

.font {
    width: 242px;
    margin-right: 8px;
    font-weight: 600;
}

.has-lens .ico {
    margin-left: 3px;
}

.size .spin {
    margin: 0 2px 0 3px;
}

.size .combo {
    width: 104px;
    font-weight: 600;
}

.caps {
    grid-template-columns: 36px 36px 36px;
    column-gap: 8px;
    width: 135px;
    padding-left: 5px;
    font-family: "Liberation Serif", serif;
    font-size: 22px;
    font-weight: 700;
}

.caps small,
.caps sup,
.caps sub {
    font-size: 15px;
    line-height: 15px;
}

.caps sup {
    align-self: flex-start;
}

.caps sub {
    align-self: flex-end;
}

.quick {
    flex: 1;
    display: flex;
    align-items: center;
    justify-content: flex-end;
    height: 60px;
}

.quick .btn {
    margin-right: 6px;
}

.quick .flyout {
    height: 58px;
    width: 36px;
    margin: 0;
    border-left: 1px solid #363735;
}

/* Work area */
.workarea {
    flex: 1;
    min-height: 0;
    display: flex;
    background: #2a2b29;
}

.toolbox,
.dock {
    flex: none;
    background: #474846;
}

.dock-head {
    height: 21px;
    padding: 0 5px;
    border-bottom: 1px solid #5a5b59;
    background: #343533;
    font: 16px/19px "DejaVu Sans", sans-serif;
}

.grip {
    width: 32px;
    height: 7px;
    margin: 4px auto 0;
    background: repeating-linear-gradient(90deg, #0e0e0e 0 2px, #474846 2px 3px);
}

.toolbox {
    width: 50px;
}

.tools {
    display: flex;
    flex-direction: column;
    align-items: center;
    padding: 5px 0;
    border-top: 1px solid #333432;
    box-shadow: inset 0 1px #5a5b59;
}

.first {
    padding-top: 14px;
    border: 0;
    box-shadow: none;
}

.tool {
    display: flex;
    align-items: center;
    justify-content: center;
    position: relative;
    width: 38px;
    height: 34px;
}

.tool svg {
    width: 34px;
    height: 34px;
}

.tool.on {
    background: #2b2c2a;
    box-shadow: inset 0 0 0 1px #222;
}

.tool.more::after {
    content: "";
    position: absolute;
    right: 3px;
    bottom: 3px;
    border-left: 6px solid transparent;
    border-bottom: 6px solid #eee;
}

.type-tool {
    font-family: "Liberation Serif", serif;
    font-size: 32px;
}

.colors {
    position: relative;
    padding: 1px 0 10px;
}

.text-affect {
    position: absolute;
    right: 4px;
    bottom: 8px;
    width: 18px;
    background: #2b2c2a;
    font: 700 18px/18px "Liberation Serif", serif;
    text-align: center;
}

.apply {
    margin: 0 auto 8px;
}

.document {
    flex: 1;
    min-width: 0;
    display: flex;
    flex-direction: column;
    margin: 0 4px;
}

.tabs {
    flex: none;
    height: 32px;
    background: #313230;
}

.tab {
    display: flex;
    align-items: center;
    gap: 12px;
    width: 212px;
    height: 32px;
    padding: 1px 0 0 12px;
    background: #4a4b49;
    font-size: 17px;
    font-weight: 600;
    white-space: nowrap;
}

.close {
    font-size: 20px;
    line-height: 20px;
}

.view {
    flex: 1;
    min-height: 0;
    display: grid;
    grid-template: 27px 1fr / 25px 1fr 24px;
}

.corner,
.ruler {
    width: 100%;
    height: 100%;
    background: #1f201e;
}

.corner {
    border-right: 1px solid #999;
    border-bottom: 1px solid #999;
}

.ruler text {
    fill: #a9aaa8;
    font-size: 15px;
}

.canvas {
    position: relative;
    overflow: hidden;
    background: #fdfefc;
}

/* Text frame: 18 lines on a 12pt baseline grid */
.story {
    position: absolute;
    left: 474px;
    top: 172px;
    height: 816px;
    display: grid;
    grid-auto-rows: minmax(0, 1fr);
    color: #060c18;
    font: 37px/50px "Liberation Serif", serif;
    white-space: nowrap;
}

.story p {
    height: 50px;
    margin: 0;
    background: #b3d0fb;
}

.guides {
    position: absolute;
    left: 0;
    top: 0;
    width: 100%;
    height: 100%;
    fill: none;
    stroke-width: 2;
}

.cyan {
    stroke: #6eeaec;
    stroke-width: 3;
}

.violet {
    stroke: #8a4cc0;
}

.magenta {
    stroke: #b650c8;
}

.vscroll,
.vscroll-top {
    background: #343533;
    border-left: 1px solid #222;
}

.vscroll-top::before,
.vscroll::after {
    content: "";
    display: block;
    width: 0;
    margin: 9px 0 0 4px;
    border: 7px solid transparent;
    border-top: 0;
    border-bottom: 9px solid #dddedc;
}

.vscroll {
    display: flex;
    flex-direction: column;
    justify-content: space-between;
    padding: 108px 0 8px;
}

.vscroll::after {
    border-top: 9px solid #dddedc;
    border-bottom: 0;
}

.vscroll .thumb {
    height: 250px;
    background: #8c8d8b;
}

/* Status bar */
.statusbar {
    flex: none;
    display: flex;
    align-items: center;
    height: 25px;
    background: #474846;
    border-top: 1px solid #2a2b29;
}

.pager {
    display: flex;
    align-items: center;
    gap: 11px;
    width: 333px;
    padding-left: 34px;
}

.nav {
    fill: #dddedc;
}

.dim {
    fill: #8c8d8b;
}

.page {
    width: 145px;
    margin: 0 8px 0 6px;
}

.errors {
    width: 138px;
    padding-right: 5px;
    gap: 7px;
}

.dot {
    width: 17px;
    height: 17px;
    border-radius: 50%;
    background: #55ad2c;
}

.hscroll {
    flex: 1;
    display: flex;
    align-items: center;
    height: 24px;
    padding: 0 9px 0 10px;
    background: #343533;
}

.hscroll .thumb {
    width: 256px;
    height: 24px;
    margin-left: 384px;
    background: #8c8d8b;
}

.arrow {
    border: 7px solid transparent;
}

.left {
    border-left: 0;
    border-right: 9px solid #dddedc;
}

.right {
    margin-left: auto;
    border-right: 0;
    border-left: 9px solid #dddedc;
}

.split {
    width: 25px;
    height: 18px;
    margin: 0 10px 0 8px;
    border: 2px solid #cfd0ce;
    background: linear-gradient(90deg, #333 0 9px, #cfd0ce 9px 11px, #333 11px);
}

.resize {
    margin-right: 1px;
}

/* Panel dock */
.dock {
    width: 263px;
}

.dock .dock-head {
    text-align: right;
}

.panel-group {
    padding-bottom: 5px;
    border-top: 1px solid #5a5b59;
    border-bottom: 1px solid #262725;
}

.dock-head + .panel-group {
    border-top: 0;
}

.panel-group .grip {
    margin: 4px auto;
}

.panel {
    display: flex;
    align-items: center;
    gap: 13px;
    width: 100%;
    height: 45px;
    padding-left: 17px;
    font-size: 17px;
    font-weight: 700;
}

.panel svg {
    width: 30px;
    height: 30px;
}

/* Overlays */
.tooltip {
    position: absolute;
    left: 1189px;
    top: 176px;
    padding: 0 12px;
    background: #fbf5bf;
    box-shadow: 0 3px 5px #0009;
    color: #111;
    font: 20px/29px "Liberation Sans", sans-serif;
}

.pointer {
    position: absolute;
    left: 1183px;
    top: 139px;
}

.highlight {
    position: absolute;
    left: 1138px;
    top: 68px;
    width: 298px;
    height: 233px;
    border: 6px solid #ff3347;
}

.arrow-note {
    position: absolute;
    left: 1448px;
    top: 312px;
}

.watermark {
    position: absolute;
    right: 18px;
    bottom: 14px;
    color: #2a2b29;
    font: 300 59px/60px Lato, sans-serif;
    text-shadow: 0 0 2px #8c8d8b, 0 0 2px #8c8d8b;
}

.watermark b {
    font-weight: 900;
}
```
